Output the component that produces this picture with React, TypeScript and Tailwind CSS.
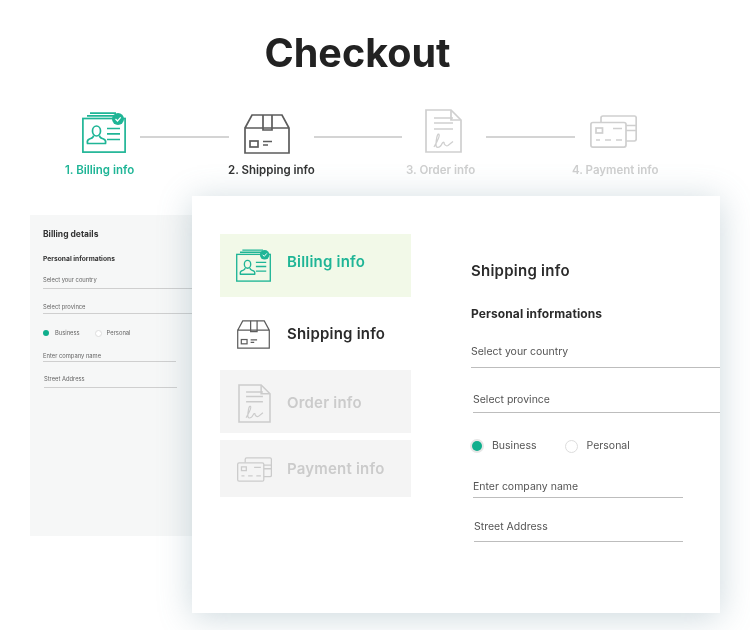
const font = { fontFamily: '"Inter", "Liberation Sans", sans-serif' };

function IdCardIcon({ className }: { className: string }) {
  return (
    <svg viewBox="0 0 44 41" fill="none" stroke="currentColor" strokeWidth="1.7" className={className}>
      <path d="M8 1.2H34M5 3.8H36" />
      <rect x="0.9" y="6.5" width="42.2" height="33.6" />
      <path d="M25 16.5H38M25 21.8H38M25 27.5H38" />
      <ellipse cx="14.5" cy="19" rx="4" ry="5" />
      <path d="M11.5 23.5C11.5 26 10 26 7.5 27C5 28 5 29.5 5.5 31.5H23.5C24 29.5 24 28 21.5 27C19 26 17.5 26 17.5 23.5" />
      <circle cx="36" cy="7" r="6" fill="currentColor" stroke="none" />
      <path d="M33.5 7L35.5 9L38.7 5.3" stroke="#ffffff" strokeWidth="1.2" />
    </svg>
  );
}

function BoxIcon({ className }: { className: string }) {
  return (
    <svg viewBox="0 0 46 40" fill="none" stroke="currentColor" strokeWidth="1.7" className={className}>
      <path d="M1 14L8 1H38L45 14V39H1V14H45" />
      <path d="M19 1V16H28V1" />
      <rect x="6" y="27" width="8" height="6" />
      <path d="M19 27.5H28M19 31H24" />
    </svg>
  );
}

function DocIcon({ className }: { className: string }) {
  return (
    <svg viewBox="0 0 37 44" fill="none" stroke="currentColor" strokeWidth="1.7" className={className}>
      <path d="M1 1H26L36 11V43H1V1Z" />
      <path d="M26 1V11H36" />
      <path d="M9 9H28M9 14H28M9 20H28" />
      <path d="M9 38C12 33 15.5 27 14 25.2C12 24 11 32 11 36C11 39 14 39 16 36.5C17 34.5 18 32.5 19 33.5C19 35.5 21 37.5 23 36.5L28 32.5" strokeWidth="1.3" />
    </svg>
  );
}

function CardsIcon({ className }: { className: string }) {
  return (
    <svg viewBox="0 0 47 33" fill="none" stroke="currentColor" strokeWidth="1.7" className={className}>
      <path d="M11 7V3C11 1.8 11.8 1 13 1H44.5C45.5 1 46.2 1.8 46.2 3V24C46.2 25.2 45.5 26 44.5 26H36" />
      <path d="M36 10.5H46M36 15.5H46" />
      <rect x="0.9" y="7.5" width="35.1" height="24.6" rx="2" />
      <rect x="6" y="13" width="6.5" height="5" />
      <path d="M23 13.5H32M6 25H10M15 25H21M26 25H32" />
    </svg>
  );
}

const steps = [
  { label: '1. Billing info', width: 'w-[74px]', color: 'text-[#1fb596]', iconColor: '', labelMargin: '-ml-px', iconMargin: 'ml-[16px]', Icon: IdCardIcon, size: 'w-[44px] h-[41px] mt-[3px]', line: 'w-[89px]' },
  { label: '2. Shipping info', width: 'w-[85px]', color: 'text-[#333333]', iconColor: 'text-[#5c5c5c]', labelMargin: '-ml-px', iconMargin: 'ml-[15px]', Icon: BoxIcon, size: 'w-[46px] h-[40px] mt-[5px]', line: 'w-[88px]' },
  { label: '3. Order info', width: 'w-[84px]', color: 'text-[#cfcfcf]', iconColor: '', labelMargin: 'ml-[4px]', iconMargin: 'ml-[23px]', Icon: DocIcon, size: 'w-[37px] h-[44px]', line: 'w-[89px]' },
  { label: '4. Payment info', width: 'w-[84px]', color: 'text-[#cfcfcf]', iconColor: '', labelMargin: '-ml-[3px]', iconMargin: 'ml-[15px]', Icon: CardsIcon, size: 'w-[47px] h-[33px] mt-[6px]', line: '' },
];

const menu = [
  { label: 'Billing info', row: 'h-[63px] bg-[#f2f9e8] text-[#1fb596]', text: 'mb-[7px]', Icon: IdCardIcon, size: 'w-[35px] h-[33px]' },
  { label: 'Shipping info', row: 'h-[73px] pt-[1px] text-[#2b2b2b]', text: '', Icon: BoxIcon, size: 'ml-[1px] w-[33px] h-[29px] text-[#5c5c5c]' },
  { label: 'Order info', row: 'h-[63px] pt-[3px] bg-[#f4f4f4] text-[#cbcbcb]', text: '', Icon: DocIcon, size: 'ml-[2px] w-[33px] h-[39px]' },
  { label: 'Payment info', row: 'h-[57px] pt-[2px] mt-[7px] bg-[#f4f4f4] text-[#cbcbcb]', text: '', Icon: CardsIcon, size: 'ml-[1px] w-[35px] h-[25px]' },
];

export default function App() {
  return (
    <div className="w-[750px] h-[630px] overflow-hidden bg-white blur-[0.4px]" style={font}>
      <h1 className="pt-[28px] pr-[35px] text-center text-[39.5px] leading-[50px] font-bold text-[#222222]">Checkout</h1>

      <div className="mt-[31px] flex pl-[66px]">
        {steps.map((step, i) => (
          <div key={step.label} className="flex">
            <div className={`${step.width} ${step.color} shrink-0`}>
              <div className={`flex h-[46px] items-start ${step.iconMargin} ${step.iconColor}`}>
                <step.Icon className={step.size} />
              </div>
              <div className={`mt-[7px] h-4 text-[11.5px] leading-4 font-semibold whitespace-nowrap ${step.labelMargin}`}>
                {step.label}
              </div>
            </div>
            {i < 3 && <div className={`mt-[27px] h-[2px] bg-[#d4d4d4] ${step.line}`} />}
          </div>
        ))}
      </div>

      <div className="mt-[18px] ml-[30px] flex items-start">
        {/* billing form peeking out behind the card */}
        <div className="mt-[19px] h-[321px] w-[162px] shrink-0 bg-[#f6f7f7] pt-[13px] pl-[13px]">
          <div className="h-3 text-[8.5px] leading-3 font-bold text-[#333333]">Billing details</div>
          <div className="mt-[13px] h-3 text-[6.7px] leading-3 font-bold text-[#333333]">Personal informations</div>
          <div className="mt-[10px] box-content h-[13px] border-b border-[#cfcfcf] text-[5.8px] leading-[10px] text-[#666666]">Select your country</div>
          <div className="mt-[13px] box-content h-[11px] border-b border-[#cfcfcf] text-[5.8px] leading-[10px] text-[#666666]">Select province</div>
          <div className="mt-[14px] flex h-[10px] items-center text-[5.8px] text-[#666666]">
            <span className="h-[6px] w-[6px] rounded-full bg-[#0fae8c]" />
            <span className="ml-[6px]">Business</span>
            <span className="ml-[15px] h-[7px] w-[7px] rounded-full border border-[#dddddd] bg-white" />
            <span className="ml-[5px]">Personal</span>
          </div>
          <div className="mt-[13px] box-content h-[10px] w-[133px] border-b border-[#cfcfcf] text-[5.8px] leading-[10px] text-[#666666]">Enter company name</div>
          <div className="mt-[12px] ml-px box-content h-[13px] w-[133px] border-b border-[#cfcfcf] text-[5.8px] leading-[10px] text-[#666666]">Street Address</div>
        </div>

        <div className="relative flex h-[417px] w-[528px] shrink-0 bg-white shadow-[0_4px_32px_rgba(95,135,150,0.32)]">
          <div className="mt-[38px] ml-[28px] w-[191px] shrink-0">
            {menu.map((item) => (
              <div key={item.label} className={`flex items-center ${item.row}`}>
                <div className="flex w-[67px] shrink-0 pl-[16px]">
                  <item.Icon className={item.size} />
                </div>
                <span className={`text-[15px] font-semibold tracking-[0.2px] ${item.text}`}>{item.label}</span>
              </div>
            ))}
          </div>

          <div className="ml-[60px] min-w-0 flex-1 text-[#555555]">
            <div className="mt-[65px] h-5 text-[15px] leading-5 font-semibold tracking-[0.25px] text-[#2b2b2b]">Shipping info</div>
            <div className="mt-[25px] h-4 text-[12px] leading-4 font-bold tracking-[0.1px] text-[#2b2b2b]">Personal informations</div>
            <div className="mt-[22px] border-b border-[#bdbdbd] pb-[7px] text-[10.5px] leading-4">Select your country</div>
            <div className="mt-[24px] ml-[2px] border-b border-[#bdbdbd] pb-[4px] text-[10.5px] leading-4">Select province</div>
            <div className="mt-[25px] flex h-4 items-center text-[10.5px]">
              <span className="ml-[1px] h-[10px] w-[10px] rounded-full bg-[#0fae8c] shadow-[0_0_0_2px_#e6e6e6]" />
              <span className="ml-[10px]">Business</span>
              <span className="ml-[28px] h-[13px] w-[13px] rounded-full border border-[#dddddd] bg-white" />
              <span className="ml-[9px]">Personal</span>
            </div>
            <div className="mt-[25px] ml-[2px] w-[210px] border-b border-[#bdbdbd] pb-[2px] text-[10.5px] leading-4">Enter company name</div>
            <div className="mt-[21px] ml-[3px] w-[209px] border-b border-[#bdbdbd] pb-[6px] text-[10.5px] leading-4">Street Address</div>
          </div>
        </div>
      </div>
    </div>
  );
}
